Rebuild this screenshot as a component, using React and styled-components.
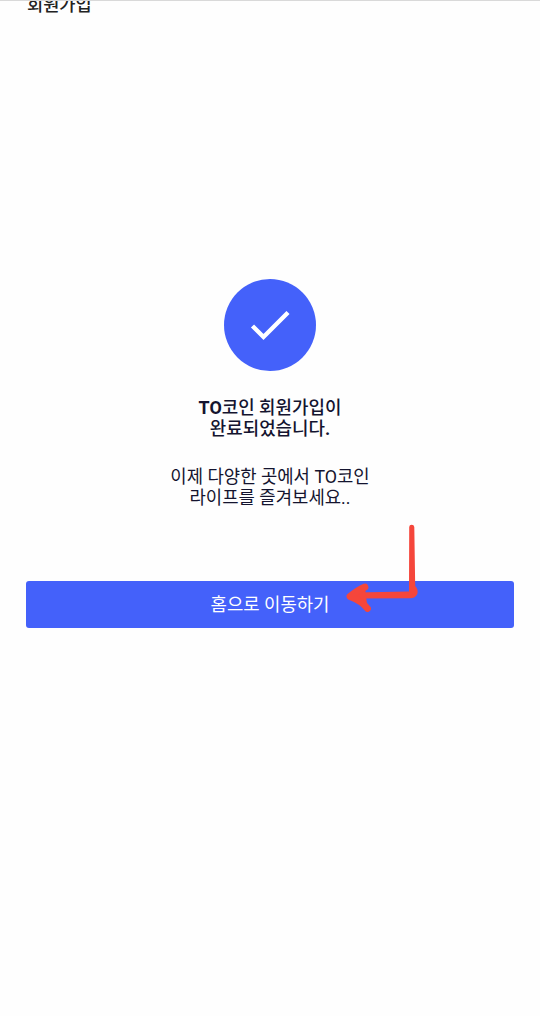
import React from 'react';
import styled, { createGlobalStyle } from 'styled-components';

const GlobalStyle = createGlobalStyle`
  * {
    box-sizing: border-box;
  }

  body {
    margin: 0;
    background: #fefefe;
    font-family: Roboto, 'Noto Sans CJK KR', sans-serif;
    color: #14142f;
  }
`;

const Page = styled.div`
  height: 1016px;
  overflow: hidden;
  display: flex;
  flex-direction: column;
  border-top: 1px solid #d9d9d9;
`;

/* The title is scrolled half out of view */
const Header = styled.header`
  height: 14px;
  padding: 0 27px;
  overflow: hidden;
  display: flex;
  align-items: flex-end;
`;

const HeaderTitle = styled.h1`
  margin: 0;
  font-size: 17.6px;
  font-weight: 500;
  line-height: 20px;
  color: #222;
`;

const Content = styled.main`
  display: flex;
  flex-direction: column;
  align-items: center;
  padding: 264px 26px 0;
`;

const CheckCircle = styled.div`
  width: 92px;
  height: 92px;
  border-radius: 50%;
  background: #4461fa;
  display: flex;
  align-items: center;
  justify-content: center;
`;

const Message = styled.p`
  margin: ${({ $strong }) => ($strong ? '26px 0 0' : '27px 0 0')};
  font-size: ${({ $strong }) => ($strong ? '17.9px' : '17.8px')};
  font-weight: ${({ $strong }) => ($strong ? 500 : 400)};
  line-height: 21px;
  text-align: center;
`;

const Bold = styled.span`
  font-weight: 700;
`;

const HomeButton = styled.button`
  position: relative;
  width: 100%;
  height: 47px;
  margin-top: 73px;
  padding: 0;
  border: 0;
  border-radius: 3px;
  background: #4461fa;
  color: #fff;
  font-family: inherit;
  font-size: 17.8px;
  line-height: 21px;
`;

const Arrow = styled.svg`
  position: absolute;
  top: -66px;
  left: 304px;
  width: 100px;
  height: 105px;
  pointer-events: none;
`;

const App = () => {
  return (
    <>
      <GlobalStyle />
      <Page>
        <Header>
          <HeaderTitle>회원가입</HeaderTitle>
        </Header>
        <Content>
          <CheckCircle>
            <svg width="92" height="92" viewBox="0 0 92 92" fill="none">
              <path d="M28.5 47L39.5 58L64 33.5" stroke="#fff" strokeWidth="4.4" />
            </svg>
          </CheckCircle>
          <Message $strong>
            <Bold>TO</Bold>코인 회원가입이
            <br />
            완료되었습니다<Bold>.</Bold>
          </Message>
          <Message>
            이제 다양한 곳에서 TO코인
            <br />
            라이프를 즐겨보세요..
          </Message>
          <HomeButton type="button">
            홈으로 이동하기
            <Arrow viewBox="0 0 100 105" fill="#f5463b">
              <path d="M79.2 12Q79.3 9.8 81.7 9.8Q84 9.8 84.3 12L85.2 71Q88.500 74 87.300 79Q85.500 83.200 80 83.200L25 83.500V77.500L79 76.500Z" />
              <path
                d="M35 72Q28 75 20 81.500Q32 86 37.500 93.500"
                stroke="#f5463b"
                strokeWidth="6.8"
                strokeLinecap="round"
                strokeLinejoin="round"
              />
            </Arrow>
          </HomeButton>
        </Content>
      </Page>
    </>
  );
};

export default App;
